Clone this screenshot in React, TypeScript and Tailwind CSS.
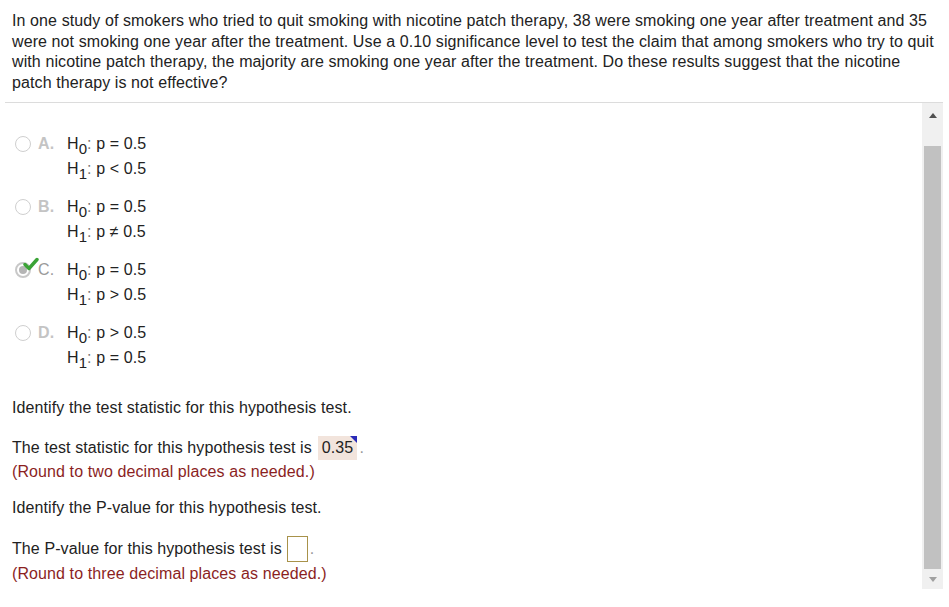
import React from 'react';

type Opt = { key: string; h0: string; h1: string; checked?: boolean };

const options: Opt[] = [
  { key: 'A.', h0: 'p = 0.5', h1: 'p < 0.5' },
  { key: 'B.', h0: 'p = 0.5', h1: 'p ≠ 0.5' },
  { key: 'C.', h0: 'p = 0.5', h1: 'p > 0.5', checked: true },
  { key: 'D.', h0: 'p > 0.5', h1: 'p = 0.5' },
];

const Radio = ({ checked }: { checked?: boolean }) => {
  if (!checked) {
    return <div className="h-[16px] w-[16px] rounded-full border-[1.5px] border-[#cfcfcf] bg-white" />;
  }
  return (
    <div className="relative h-[16px] w-[16px]">
      <div className="flex h-[16px] w-[16px] items-center justify-center rounded-full border-[2px] border-[#c8c8c8] bg-white">
        <div className="h-[8px] w-[8px] rounded-full bg-[#b5b5b5]" />
      </div>
      <svg className="absolute -right-[8px] -top-[5px]" width="16" height="14" viewBox="0 0 16 14">
        <path d="M2 7.5 L6 11.5 L14 2.5" fill="none" stroke="#3aa335" strokeWidth="3.4" strokeLinecap="round" strokeLinejoin="round" />
      </svg>
    </div>
  );
};

const Hyp = ({ sub, text }: { sub: string; text: string }) => (
  <div className="h-[25px] leading-[25px] text-[16px] text-[#222]">
    H<sub className="relative top-[5px] align-baseline text-[15px] leading-none">{sub}</sub>
    <span className="text-[#777]">:</span> {text}
  </div>
);

export default function App() {
  return (
    <div
      className="h-[607px] w-[949px] bg-white text-[#222] tracking-[0.1px]"
      style={{ fontFamily: '"Liberation Sans", Arial, sans-serif' }}
    >
      <div className="px-[12px] pt-[11px] pb-[9px] text-[16px] leading-[20.6px]">
        In one study of smokers who tried to quit smoking with nicotine patch therapy, 38 were smoking one year after treatment and 35
        <br />
        were not smoking one year after the treatment. Use a 0.10 significance level to test the claim that among smokers who try to quit
        <br />
        with nicotine patch therapy, the majority are smoking one year after the treatment. Do these results suggest that the nicotine
        <br />
        patch therapy is not effective?
      </div>
      <div className="ml-[5px] mr-[6px] h-px bg-[#dcdcdc]" />
      <div className="flex h-[486px]">
        <div className="flex-1 pt-[28px]">
          <div className="flex flex-col gap-[13px]">
            {options.map((o) => (
              <div key={o.key} className="flex items-start">
                <div className="flex h-[25px] w-[67px] items-center pl-[15px]">
                  <Radio checked={o.checked} />
                  <span className={`ml-[7px] text-[16px] ${o.checked ? 'font-normal text-[#9a9a9a]' : 'font-bold text-[#c4c4c4]'}`}>
                    {o.key}
                  </span>
                </div>
                <div>
                  <Hyp sub="0" text={o.h0} />
                  <Hyp sub="1" text={o.h1} />
                </div>
              </div>
            ))}
          </div>
          <div className="mt-[26px] pl-[12px] text-[16px] leading-[24px]">
            <div>Identify the test statistic for this hypothesis test.</div>
            <div className="mt-[16px] flex items-center">
              <span>The test statistic for this hypothesis test is</span>
              <span className="relative ml-[6px] flex h-[24px] items-center bg-[#f2e4dc] px-[4px]">
                0.35
                <span className="absolute right-0 top-0 h-0 w-0 border-l-[7px] border-t-[7px] border-l-transparent border-t-[#2a2ab8]" />
              </span>
              <span className="ml-[2px] text-[#999]">.</span>
            </div>
            <div className="text-[#8b1f1f]">(Round to two decimal places as needed.)</div>
            <div className="mt-[12px]">Identify the P-value for this hypothesis test.</div>
            <div className="mt-[16px] flex items-center">
              <span>The P-value for this hypothesis test is</span>
              <span className="ml-[5px] h-[26px] w-[21px] border border-[#a8924a] bg-white" />
              <span className="ml-[2px] text-[#999]">.</span>
            </div>
            <div className="text-[#8b1f1f]">(Round to three decimal places as needed.)</div>
          </div>
        </div>
        <div className="mr-[6px] flex w-[21px] flex-col items-center bg-[#f0f0f0]">
          <div className="flex h-[24px] items-center justify-center">
            <div className="h-0 w-0 border-x-[4px] border-b-[5px] border-x-transparent border-b-[#505050]" />
          </div>
          <div className="mt-[19px] h-[423px] w-[17px] bg-[#c1c1c1]" />
          <div className="flex h-[20px] items-center justify-center">
            <div className="h-0 w-0 border-x-[4px] border-t-[5px] border-x-transparent border-t-[#a0a0a0]" />
          </div>
        </div>
      </div>
    </div>
  );
}
